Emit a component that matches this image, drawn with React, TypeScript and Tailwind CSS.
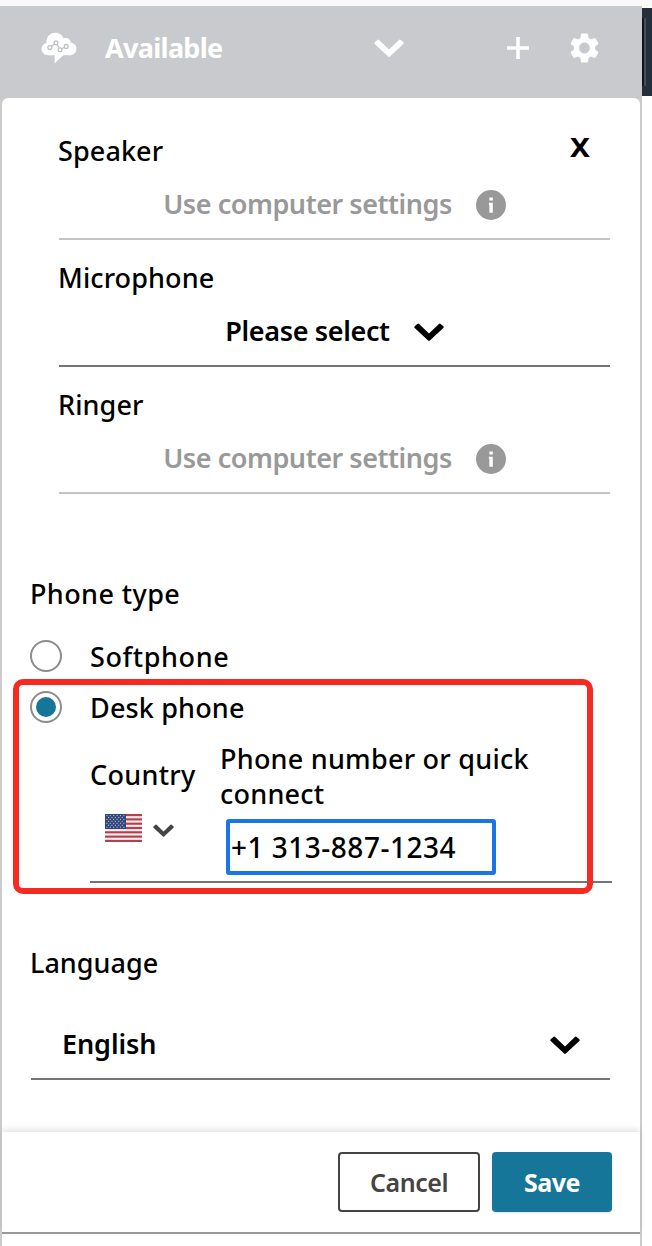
import React from "react";

function Chevron({ className }: { className: string }) {
  return (
    <svg viewBox="0 0 30 18" className={className} fill="currentColor">
      <path d="M15 10.500 24.900.9Q25.800.1 26.700.9L29.300 3.300Q30.100 4.200 29.300 5.100L15.900 17.600Q15 18.300 14.100 17.600L.7 5.100Q-.1 4.200.7 3.300L3.300.9Q4.200.1 5.100.9z" />
    </svg>
  );
}

function Info() {
  return (
    <svg viewBox="0 0 30 30" className="mt-0.5 h-[30px] w-[30px]">
      <circle cx="15" cy="15" r="15" fill="#999" />
      <path d="M13.400 7.400h3.400v3h-3.400zM12.900 12.800h3.900v10h-3.400v-8h-.5z" fill="#fff" />
    </svg>
  );
}

function CloudLogo() {
  return (
    <svg viewBox="0 0 36 32" className="h-8 w-9">
      <path
        d="M7.500 23.200C3.500 23.200.6 20.600.6 17c0-3 2-5.300 4.800-6C5.200 5 9 .8 14.200.8c4 0 7 2.200 8.400 5.600 1-.5 2-.6 3-.4 2.300.4 3.900 2 4.200 4.600 3.300.7 5.600 3 5.600 6.300 0 3.600-2.800 6.300-6.600 6.300h-6.600L13.600 31.400v-8.200z"
        fill="#fff"
      />
      <g fill="none" stroke="#bfc0c3" strokeWidth="1.300">
        <path d="M10.400 14.600 13.400 12M16 12.500l2.400 3.600M20.600 16.800l3-1.600" />
        <circle cx="8.800" cy="15.600" r="1.900" />
        <circle cx="15" cy="10.800" r="1.900" />
        <circle cx="19" cy="17.800" r="1.900" />
        <circle cx="25.200" cy="14.400" r="1.900" />
      </g>
    </svg>
  );
}

function Gear() {
  return (
    <svg viewBox="2.200 2 19.600 20" preserveAspectRatio="none" className="h-[30px] w-[29px]" fill="#fff">
      <path d="M19.140 12.940c.040-.3.060-.610.060-.940 0-.320-.020-.640-.070-.940l2.030-1.580c.180-.140.230-.410.120-.610l-1.920-3.320c-.120-.220-.370-.290-.590-.220l-2.390.960c-.5-.380-1.030-.7-1.620-.940l-.360-2.540c-.040-.240-.240-.410-.480-.410h-3.840c-.240 0-.430.170-.470.410l-.360 2.540c-.590.240-1.130.570-1.620.940l-2.390-.960c-.220-.080-.470 0-.590.220L2.740 8.870c-.120.210-.080.470.120.610l2.030 1.580c-.050.3-.090.630-.090.940s.020.640.070.940l-2.030 1.580c-.180.140-.230.410-.120.610l1.920 3.320c.120.220.370.290.590.220l2.390-.960c.5.380 1.030.7 1.620.940l.360 2.540c.050.240.240.410.480.410h3.840c.240 0 .440-.170.470-.410l.360-2.540c.590-.240 1.130-.560 1.620-.940l2.390.960c.220.080.470 0 .590-.220l1.920-3.320c.120-.220.070-.470-.120-.610l-2.010-1.580zM12 15.600c-1.980 0-3.600-1.620-3.600-3.600s1.620-3.600 3.600-3.600 3.600 1.620 3.600 3.600-1.620 3.600-3.600 3.600z" />
    </svg>
  );
}

function Flag() {
  const stars = [];
  for (let r = 0; r < 7; r++) {
    for (let c = 0; c < 6 - (r % 2); c++) {
      stars.push(<rect key={`${r}-${c}`} x={1.3 + c * 3.4 + (r % 2) * 1.7} y={1 + r * 1.95} width="1.1" height="1.1" fill="#b4bed8" />);
    }
  }
  return (
    <svg viewBox="0 0 37 28" className="h-7 w-[37px]">
      <rect width="37" height="28" fill="#fbeff0" />
      {[0, 1, 2, 3, 4, 5, 6].map((i) => (
        <rect key={i} y={(i * 56) / 13} width="37" height={28 / 13} fill="#b5404c" />
      ))}
      <rect width="21" height="15" fill="#33457a" />
      {stars}
    </svg>
  );
}

function DeviceRow({ label, disabled, children }: { label: string; disabled?: boolean; children: React.ReactNode }) {
  return (
    <div className={`mr-[30px] ml-[57px] h-[127px] border-b-2 pt-5 ${disabled ? "border-[#c4c4c4]" : "border-[#757575]"}`}>
      <div className="-ml-px h-9 font-medium tracking-[0.1px]">{label}</div>
      <div className={`mt-[17px] flex h-9 items-center justify-center gap-6 font-semibold ${disabled ? "text-[#999]" : "text-black"}`}>
        {children}
      </div>
    </div>
  );
}

export default function App() {
  return (
    <div className="relative h-[1246px] w-[652px] overflow-hidden bg-white font-['Noto_Sans',sans-serif] text-[27px] leading-9 whitespace-nowrap text-black">
      <div className="h-[6px] bg-[#f9f9fb]" />
      <div className="flex h-[1240px]">
        <div className="flex w-[642px] flex-col bg-[#c9cacd]">
          <header className="flex h-[92px] shrink-0 items-center pb-2 pl-[41px] text-white">
            <CloudLogo />
            <span className="ml-[28px] w-[269px] font-bold tracking-[-0.7px]">Available</span>
            <Chevron className="h-[18px] w-[30px]" />
            <svg viewBox="0 0 22 22" className="ml-[103px] h-[22px] w-[22px]" stroke="currentColor" strokeWidth="3.6">
              <path d="M11 0v22M0 11h22" />
            </svg>
            <div className="ml-[41px]">
              <Gear />
            </div>
          </header>
          <main className="relative mx-[2px] flex grow flex-col rounded-t-md bg-white pt-[15px] shadow-[-2px_0_0_#ccc,2px_0_0_#ccc]">
            <div className="absolute top-0 left-7 flex h-px items-end overflow-hidden font-semibold text-black">
              <span className="-mb-[7px]">Audio devices</span>
            </div>
            <DeviceRow label="Speaker" disabled>
              <span className="tracking-[-0.45px]">Use computer settings</span>
              <Info />
            </DeviceRow>
            <DeviceRow label="Microphone">
              <span className="tracking-[-0.35px]">Please select</span>
              <Chevron className="mt-0.5 h-[18px] w-[30px]" />
            </DeviceRow>
            <DeviceRow label="Ringer" disabled>
              <span className="tracking-[-0.45px]">Use computer settings</span>
              <Info />
            </DeviceRow>

            <div className="mt-[82px] ml-7 h-9 font-medium tracking-[0.4px]">Phone type</div>
            <div className="mt-[26px] ml-7 flex h-9 items-center gap-7 font-medium tracking-[0.6px]">
              <span className="h-8 w-8 rounded-full border-2 border-[#8c8c8c]" />
              <span className="mt-0.5">Softphone</span>
            </div>
            <div className="mt-[15px] ml-7 flex h-9 items-center gap-7 font-medium tracking-[0.15px]">
              <span className="flex h-8 w-8 items-center justify-center rounded-full border-2 border-[#8c8c8c]">
                <span className="h-5 w-5 rounded-full bg-[#16769a]" />
              </span>
              <span className="mt-0.5">Desk phone</span>
            </div>
            <div className="mt-4 mr-7 ml-[88px] flex h-[142px] border-b-2 border-[#757575] font-medium">
              <div className="w-[130px] pt-4">
                <div className="h-9 tracking-[0.3px]">Country</div>
                <div className="mt-[21px] ml-[15px] flex items-center gap-[11px] text-[#444]">
                  <Flag />
                  <Chevron className="mt-1 h-[13px] w-[21px]" />
                </div>
              </div>
              <div>
                <div className="leading-[35px] tracking-[0.24px]">
                  Phone number or quick
                  <br />
                  connect
                </div>
                <div className="mt-2 ml-[6px] h-14 w-[270px] rounded-[3px] border-4 border-[#1a76e8] pl-px text-[28px] leading-[48px] tracking-[0.5px]">+1 313-887-1234</div>
              </div>
            </div>

            <div className="mt-[62px] ml-7 h-9 font-medium">Language</div>
            <div className="mt-[45px] mr-[30px] ml-[29px] flex h-[54px] items-start justify-between border-b-2 border-[#757575] pr-[30px] pl-[31px] font-semibold tracking-[-0.1px]">
              <span>English</span>
              <Chevron className="mt-[10px] h-[18px] w-[30px]" />
            </div>

            <footer className="mt-[52px] flex h-[102px] gap-3 border-b-2 border-[#999] pt-5 pl-[336px] text-[25px] shadow-[0_-3px_6px_rgba(0,0,0,0.1)]">
              <div className="h-[60px] w-[142px] rounded border-2 border-[#444] text-center leading-[57px] font-semibold tracking-[-0.45px] text-[#444]">Cancel</div>
              <div className="h-[60px] w-[120px] rounded bg-[#16769a] text-center leading-[61px] font-bold tracking-[-0.5px] text-white shadow-sm">Save</div>
            </footer>
          </main>
        </div>
        <div className="mt-[2px] h-[88px] w-[10px] bg-[#252f3b] py-[10px]">
          <div className="h-full w-1 border-r-2 border-[#45505a] bg-[#0d151d]" />
        </div>
      </div>
      <div className="absolute top-[129px] left-[570px] origin-left scale-x-110 font-bold">X</div>
      <div className="absolute top-[679px] left-[13px] h-[215px] w-[580px] rounded-[10px] border-[6px] border-[#f72a22]" />
    </div>
  );
}
